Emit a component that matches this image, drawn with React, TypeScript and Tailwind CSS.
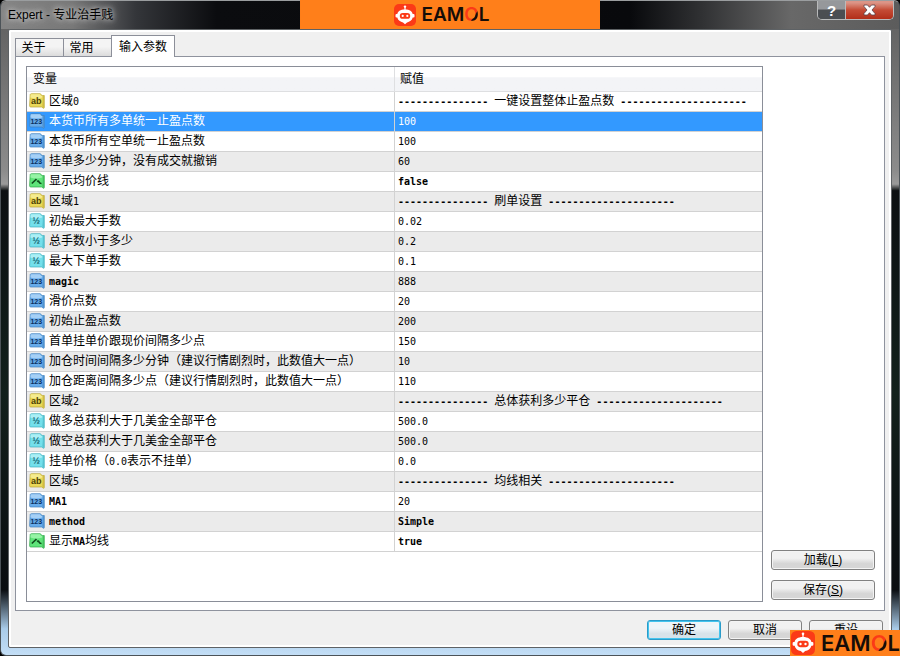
import React from "react";

type Kind = "text" | "int" | "double" | "bool";

type Param = { kind: Kind; name: string; value: string; selected?: boolean };

const DASH_L = "-".repeat(15);
const DASH_R = "-".repeat(21);
const section = (title: string) => `${DASH_L} ${title} ${DASH_R}`;

const params: Param[] = [
  { kind: "text", name: "区域0", value: section("一键设置整体止盈点数") },
  { kind: "int", name: "本货币所有多单统一止盈点数", value: "100", selected: true },
  { kind: "int", name: "本货币所有空单统一止盈点数", value: "100" },
  { kind: "int", name: "挂单多少分钟，没有成交就撤销", value: "60" },
  { kind: "bool", name: "显示均价线", value: "false" },
  { kind: "text", name: "区域1", value: section("刷单设置") },
  { kind: "double", name: "初始最大手数", value: "0.02" },
  { kind: "double", name: "总手数小于多少", value: "0.2" },
  { kind: "double", name: "最大下单手数", value: "0.1" },
  { kind: "int", name: "magic", value: "888" },
  { kind: "int", name: "滑价点数", value: "20" },
  { kind: "int", name: "初始止盈点数", value: "200" },
  { kind: "int", name: "首单挂单价跟现价间隔多少点", value: "150" },
  { kind: "int", name: "加仓时间间隔多少分钟（建议行情剧烈时，此数值大一点）", value: "10" },
  { kind: "int", name: "加仓距离间隔多少点（建议行情剧烈时，此数值大一点）", value: "110" },
  { kind: "text", name: "区域2", value: section("总体获利多少平仓") },
  { kind: "double", name: "做多总获利大于几美金全部平仓", value: "500.0" },
  { kind: "double", name: "做空总获利大于几美金全部平仓", value: "500.0" },
  { kind: "double", name: "挂单价格（0.0表示不挂单）", value: "0.0" },
  { kind: "text", name: "区域5", value: section("均线相关") },
  { kind: "int", name: "MA1", value: "20" },
  { kind: "int", name: "method", value: "Simple" },
  { kind: "bool", name: "显示MA均线", value: "true" },
];

/* Latin runs use a half-width monospace face next to full-width Chinese glyphs. */
function Mixed({ text }: { text: string }) {
  const runs = text.match(/[\x20-\x7e]+|[^\x20-\x7e]+/g) ?? [];
  return (
    <>
      {runs.map((run, i) =>
        /^[\x20-\x7e]/.test(run) ? (
          <span
            key={i}
            className={`font-['DejaVu_Sans_Mono',monospace] text-[10px] ${/[A-Za-z-]/.test(run) ? "font-bold" : ""}`}
          >
            {run}
          </span>
        ) : (
          <React.Fragment key={i}>{run}</React.Fragment>
        ),
      )}
    </>
  );
}

const tones: Record<Kind, { fill: string; light: string; edge: string; ink: string; label: string }> = {
  text: { fill: "#ead858", light: "#f5eb8f", edge: "#b9a534", ink: "#4a4208", label: "ab" },
  int: { fill: "#66abea", light: "#a5d0f6", edge: "#3f7fbd", ink: "#0c2f5e", label: "123" },
  double: { fill: "#74dfeb", light: "#abeff5", edge: "#3faebd", ink: "#14606e", label: "½" },
  bool: { fill: "#5fe47a", light: "#97f3a6", edge: "#2fa548", ink: "#0f4a1c", label: "" },
};

function TypeIcon({ kind }: { kind: Kind }) {
  const t = tones[kind];
  return (
    <svg width="16" height="16" viewBox="0 0 16 16" className="shrink-0" aria-hidden="true">
      <path d="M1.200 1.500Q1.500 .7 2.500 .7H11q.8 0 1.100.9.300.9 1.200.9h2v11.800q0 1.200-1 .9l-1.600-1.200H1.800Q.6 14 .6 12.800z" fill={t.fill} stroke={t.edge} strokeWidth=".7" />
      <path d="M1.700 1.600Q2 1.200 2.600 1.200h8.200q.5 0 .9 1T13.200 3.100v1.400Q7 6.500 1.400 4.500z" fill={t.light} />
      <path d="M15 3v11.200q0 .6-.6.3l-1.200-.9Q14 8 13.800 3z" fill={t.edge} opacity=".5" />
      {kind === "bool" ? (
        <path d="M2.800 10.500 7.500 6M8 8.500q1.500-1 2 .5t2.500 1.500" fill="none" stroke={t.ink} strokeWidth="1.700" />
      ) : (
        <text
          x="7.300"
          y="11"
          textAnchor="middle"
          fontFamily="Liberation Sans, sans-serif"
          fontWeight="bold"
          fontSize={kind === "int" ? 7 : 9}
          fill={t.ink}
        >
          {t.label}
        </text>
      )}
    </svg>
  );
}

function Brand({ large = false }: { large?: boolean }) {
  return (
    <>
      <svg className={large ? "size-6" : "size-[22px]"} viewBox="0 0 22 22" aria-hidden="true">
        <rect width="22" height="22" rx="5" fill="#fb3a17" />
        <circle cx="11" cy="2.600" r="1.200" fill="#fff" />
        <path d="M11 3v4" stroke="#fff" strokeWidth="1.200" />
        <path d="M11 5.500c4.800 0 7.300 2 7.700 4.600h.8a1 1 0 0 1 1 1v1.400a1 1 0 0 1-1 1h-.8c-.6 2.800-3.200 4.500-5.700 4.900L11 20.200l-2-1.800c-2.500-.4-5.100-2.100-5.700-4.900h-.8a1 1 0 0 1-1-1v-1.400a1 1 0 0 1 1-1h.8C3.700 7.500 6.200 5.500 11 5.500z" fill="#fff" />
        <rect x="5.800" y="9" width="10.400" height="5.800" rx="2.900" fill="#fb3a17" />
        <circle cx="8.700" cy="11.900" r="1.100" fill="#fff" />
        <circle cx="13.300" cy="11.900" r="1.100" fill="#fff" />
      </svg>
      <span className={`font-[Inter,sans-serif] font-semibold leading-none text-[#160d08] ${large ? "text-[22px]" : "text-[19px]"}`}>
        EAM
        <span className="bg-linear-to-br from-[#fb3a17] from-60% to-[#160d08] to-65% bg-clip-text text-transparent">O</span>L
      </span>
    </>
  );
}

function DialogButton({ children, primary = false, className = "" }: { children: React.ReactNode; primary?: boolean; className?: string }) {
  return (
    <button
      type="button"
      className={`flex h-5 items-center justify-center rounded-[3px] border text-xs leading-none text-black ${
        primary
          ? "border-[#2a9bc9] bg-linear-to-b from-[#eef5f9] from-40% to-[#d6e3ea] to-70% shadow-[inset_0_0_0_1px_#43c4ee]"
          : "border-[#818181] bg-linear-to-b from-[#f1f1f1] from-40% to-[#d6d6d6] to-70% shadow-[inset_0_0_0_1px_#f4f4f4]"
      } ${className}`}
    >
      {children}
    </button>
  );
}

function Tab({ label, active = false }: { label: string; active?: boolean }) {
  return (
    <button
      type="button"
      role="tab"
      aria-selected={active}
      className={
        active
          ? "relative z-10 -mb-px h-[22px] w-16 border border-b-0 border-[#8c8f99] bg-white text-xs leading-none"
          : "h-[18px] w-12 border border-r-0 border-b-0 border-[#8c8f99] bg-linear-to-b from-[#f4f4f4] from-45% to-[#dcdcdc] pr-3 text-xs leading-none"
      }
    >
      {label}
    </button>
  );
}

export default function App() {
  return (
    <div className="relative flex min-h-screen flex-col overflow-hidden bg-black font-['Liberation_Sans','Noto_Sans_CJK_SC',sans-serif] text-xs text-black">
      <div className="flex flex-1 flex-col rounded-md border border-[#4c5358] border-t-[#9a9d9f] bg-[linear-gradient(180deg,#5c5c5c_0%,#8c8c8c_26%,#9a9a9a_28%,#0c1012_29%,#12201c_60%,#0a0d10_90%,#a9cbe8_96%,#c3def6_100%)] px-[7px] pb-[7px]">
        <header className="-mx-[7px] flex h-7 shrink-0 items-center justify-between rounded-t-md bg-[linear-gradient(90deg,#858585_0%,#777_8%,#34363a_15%,#0b0c0f_24%,#08090c_70%,#303133_78%,#686868_88%,#5c5c5c_100%)] pl-[7px]">
          <h1 className="text-xs leading-4 [text-shadow:0_0_5px_#ddd,0_0_8px_#ccc]">Expert - 专业治手贱</h1>
          <div className="mr-[5px] flex h-[19px] self-start overflow-hidden rounded-b-[5px] border border-t-0 border-[#b9babb]">
            <button type="button" aria-label="帮助" className="w-7 border-r border-[#bbb] bg-linear-to-b from-[#96989b] from-45% to-[#4b4e52] to-50% text-[15px] leading-none font-bold text-white">
              ?
            </button>
            <button type="button" aria-label="关闭" className="flex w-[47px] items-center justify-center bg-linear-to-b from-[#dc9486] from-10% via-[#c44b35] via-50% to-[#b22d17]">
              <svg width="13" height="12" viewBox="0 0 13 12" aria-hidden="true">
                <path d="M1 1h3.500l2 2.300L8.500 1H12v1.500L9 6l3 3.500V11H8.500l-2-2.300L4.500 11H1V9.500L4 6 1 2.500z" fill="#fff" stroke="#59414a" strokeWidth=".8" />
              </svg>
            </button>
          </div>
        </header>

        <main className="flex flex-1 flex-col rounded-xs border border-[#5e6265] bg-[#f0f0f0] px-[6px] pt-[5px] shadow-[inset_0_0_0_2px_#fff]">
          <div role="tablist" className="flex h-[21px] items-end">
            <Tab label="关于" />
            <Tab label="常用" />
            <Tab label="输入参数" active />
          </div>

          <section role="tabpanel" className="flex flex-1 gap-2 border border-[#8f939e] bg-white pt-[9px] pr-[9px] pb-2 pl-[10px]">
            <div className="flex-1 border border-[#8a8e98] bg-white">
              <table className="w-full table-fixed border-collapse text-left">
                <thead>
                  <tr className="h-6 bg-linear-to-b from-white from-40% to-[#f3f4f7] to-45%">
                    <th className="w-1/2 border-r border-b border-[#dedfe1] p-0 pl-[6px] font-normal">变量</th>
                    <th className="w-1/2 border-b border-[#dedfe1] p-0 pl-[5px] font-normal">赋值</th>
                  </tr>
                </thead>
                <tbody>
                  {params.map((p, i) => (
                    <tr key={i} className={`h-5 whitespace-nowrap ${p.selected ? "bg-[#3399ff] text-white" : i % 2 ? "bg-[#ebebeb]" : "bg-white"}`}>
                      <td className="border-r border-b border-[#d2d2d2] p-0 pl-[2px]">
                        <div className="flex h-[19px] items-center gap-1">
                          <TypeIcon kind={p.kind} />
                          <span className="leading-5">
                            <Mixed text={p.name} />
                          </span>
                        </div>
                      </td>
                      <td className="border-b border-[#d2d2d2] p-0 pl-[3px] leading-[18px]">
                        <Mixed text={p.value} />
                      </td>
                    </tr>
                  ))}
                </tbody>
              </table>
            </div>
            <div className="flex w-[104px] flex-col justify-end gap-[10px] pb-[2px]">
              <DialogButton>加载(<u>L</u>)</DialogButton>
              <DialogButton>保存(<u>S</u>)</DialogButton>
            </div>
          </section>

          <footer className="flex h-9 shrink-0 items-center justify-end gap-[7px] pt-[2px] pr-[2px]">
            <DialogButton primary className="w-[74px]">确定</DialogButton>
            <DialogButton className="w-[74px]">取消</DialogButton>
            <DialogButton className="w-[74px]">重设</DialogButton>
          </footer>
        </main>
      </div>

      <div className="absolute top-0 left-1/2 flex h-[29px] w-1/3 -translate-x-1/2 items-center justify-center gap-[5px] bg-[#ff7f1a] pr-4">
        <Brand />
      </div>
      <div className="absolute right-0 bottom-0 flex h-[26px] w-[110px] items-center gap-[6px] bg-[#ff7f1a] pl-px">
        <Brand large />
      </div>
    </div>
  );
}
